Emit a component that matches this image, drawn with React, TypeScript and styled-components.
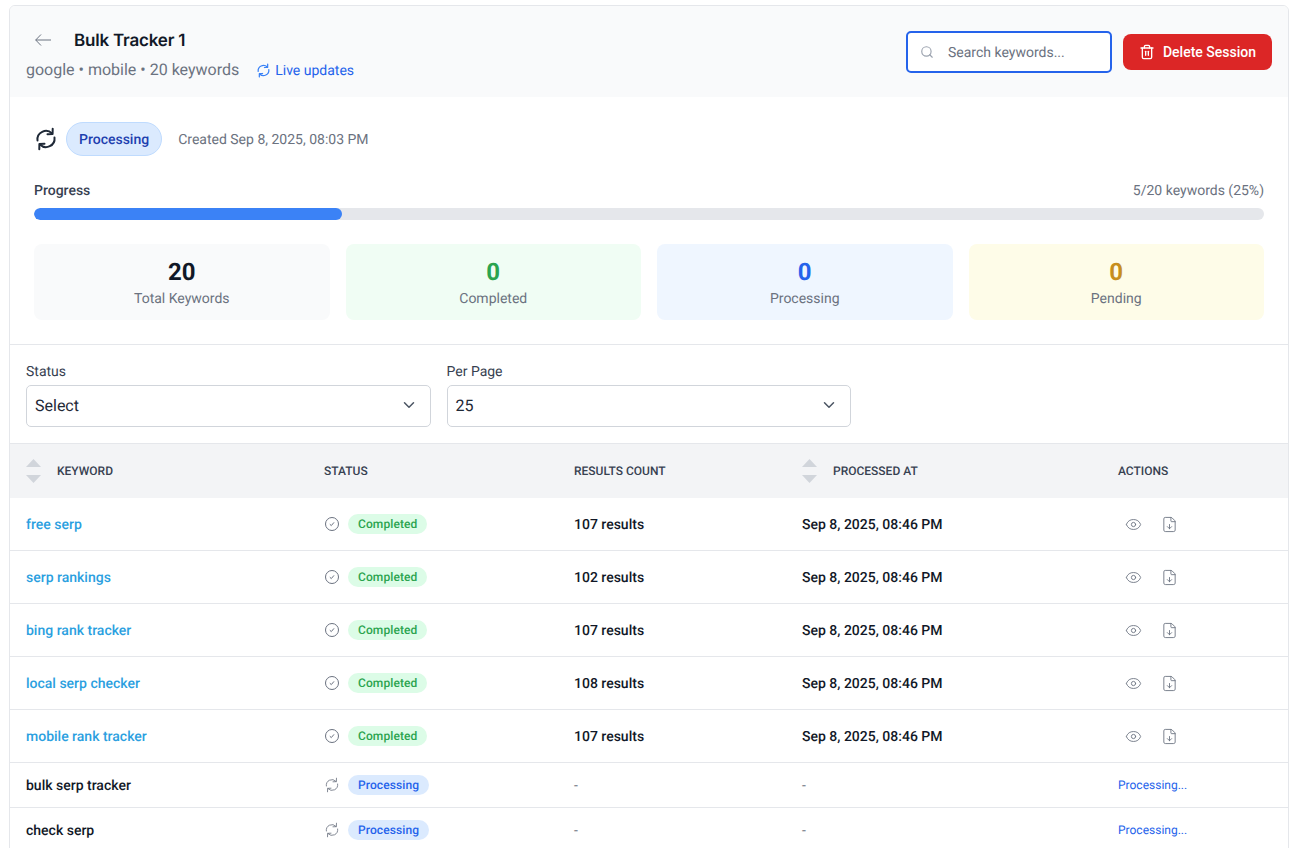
import React from "react";
import styled, { createGlobalStyle } from "styled-components";
import { Search, Trash2, ChevronDown, Eye, FileDown } from "lucide-react";

const Global = createGlobalStyle`
  html, body { margin: 0; padding: 0; height: 848px; overflow: hidden; background: #fff; }
  body { font-family: Roboto, "Liberation Sans", sans-serif; color: #111827; text-rendering: geometricPrecision; -webkit-font-smoothing: antialiased; }
  * { box-sizing: border-box; }
`;

const Page = styled.div`
  padding: 5px 9px 0 9px;
  height: 848px;
  overflow: hidden;
`;
const Card = styled.div`
  border: 1px solid #e5e7eb;
  border-radius: 6px;
  overflow: hidden;
  background: #fff;
  height: 900px;
`;
const Header = styled.header`
  height: 91px;
  background: #f9fafb;
  padding: 0 16px 0 16px;
  display: flex;
  align-items: flex-start;
  justify-content: space-between;
`;
const TitleBlock = styled.div`
  display: flex;
  flex-direction: column;
`;
const TitleRow = styled.div`
  display: flex;
  align-items: center;
  gap: 23px;
  padding: 22px 0 0 9px;
  height: 45px;
  color: #6b7280;
`;
const Title = styled.h1`
  margin: 0;
  padding-top: 2px;
  font-family: Inter, sans-serif;
  font-size: 17px;
  font-weight: 600;
  letter-spacing: -0.2px;
  color: #111827;
`;
const MetaRow = styled.div`
  display: flex;
  align-items: center;
  margin-top: 9px;
  font-size: 16px;
  color: #6b7280;
  gap: 17px;
`;
const Live = styled.span`
  display: inline-flex;
  align-items: center;
  gap: 4px;
  padding-top: 2px;
  font-size: 14px;
  color: #2563eb;
`;
const LiveIcon = styled.span`
  display: inline-flex;
  color: #3b82f6;
`;
const HeaderActions = styled.div`
  display: flex;
  align-items: center;
  gap: 11px;
  padding-top: 25px;
`;
const SearchBox = styled.div`
  width: 206px;
  height: 42px;
  border: 2px solid #2563eb;
  border-radius: 5px;
  background: #fff;
  display: flex;
  align-items: center;
  gap: 14px;
  padding-left: 12px;
  font-size: 14px;
  color: #6b7280;
`;
const SearchHint = styled.span`
  padding-top: 2px;
`;
const DeleteButton = styled.button`
  height: 36px;
  width: 149px;
  border: 0;
  border-radius: 8px;
  background: #dc2626;
  color: #fff;
  font-family: Roboto, sans-serif;
  font-size: 14px;
  font-weight: 500;
  display: flex;
  align-items: center;
  justify-content: center;
  gap: 8px;
`;
const Summary = styled.section`
  padding: 25px 24px 24px 24px;
  height: 248px;
  border-bottom: 1px solid #e5e7eb;
`;
const StatusLine = styled.div`
  display: flex;
  align-items: center;
  height: 34px;
  color: #1f2937;
`;
const BigBadge = styled.span`
  margin-left: 8px;
  height: 34px;
  padding: 2px 12px 0;
  border: 1px solid #bfdbfe;
  border-radius: 17px;
  background: #dbeafe;
  color: #1e40af;
  font-size: 14px;
  font-weight: 500;
  display: inline-flex;
  align-items: center;
`;
const Created = styled.span`
  margin-left: 16px;
  padding-top: 2px;
  font-size: 14px;
  color: #6b7280;
`;
const ProgressHead = styled.div`
  display: flex;
  justify-content: space-between;
  margin-top: 24px;
  height: 20px;
  font-size: 14px;
  line-height: 22px;
  color: #6b7280;
`;
const ProgressLabel = styled.span`
  font-weight: 500;
  color: #374151;
`;
const Track = styled.div`
  margin-top: 8px;
  height: 12px;
  border-radius: 6px;
  background: #e5e7eb;
  overflow: hidden;
`;
const Fill = styled.div`
  height: 100%;
  border-radius: 6px;
  background: #3b82f6;
`;
const Stats = styled.div`
  display: grid;
  grid-template-columns: repeat(4, 1fr);
  gap: 16px;
  margin-top: 24px;
`;
const Stat = styled.div<{ $bg: string }>`
  height: 76px;
  border-radius: 8px;
  background: ${p => p.$bg};
  display: flex;
  flex-direction: column;
  align-items: center;
  padding-top: 12px;
`;
const StatValue = styled.div<{ $color: string }>`
  font-size: 24px;
  line-height: 32px;
  font-weight: 700;
  color: ${p => p.$color};
`;
const StatLabel = styled.div`
  padding-top: 1px;
  font-size: 14px;
  line-height: 20px;
  color: #6b7280;
`;
const Filters = styled.section`
  height: 99px;
  padding: 16px 16px 0 16px;
  display: flex;
  gap: 16px;
  border-bottom: 1px solid #e5e7eb;
`;
const Field = styled.div`
  width: 404.5px;
`;
const FieldLabel = styled.div`
  padding-top: 1px;
  font-size: 14px;
  line-height: 20px;
  font-weight: 400;
  color: #374151;
  margin-bottom: 3px;
`;
const Select = styled.div`
  height: 42px;
  border: 1px solid #d1d5db;
  border-radius: 5px;
  background: #fff;
  display: flex;
  align-items: center;
  justify-content: space-between;
  padding: 0 12px 2px 8px;
  font-size: 16px;
  color: #1f2937;
`;
const Table = styled.table`
  width: 100%;
  table-layout: fixed;
  border-collapse: separate;
  border-spacing: 0;
`;
const Th = styled.th`
  height: 54px;
  padding: 0 16px;
  background: #f3f4f6;
  text-align: left;
  font-size: 12px;
  font-weight: 500;
  text-transform: uppercase;
  color: #374151;
`;
const SortWrap = styled.span`
  display: flex;
  align-items: center;
  gap: 16px;
`;
const SortIcon = styled.svg`
  width: 15px;
  height: 26px;
  flex: none;
  display: block;
`;
const Td = styled.td<{ $h: number }>`
  height: ${p => p.$h}px;
  padding: 2px 16px 0;
  font-size: 14px;
  font-weight: 500;
  color: #111827;
  border-bottom: 1px solid #e5e7eb;
`;
const Link = styled.a`
  color: #2b9fe0;
  font-weight: 500;
  text-decoration: none;
`;
const StatusCell = styled.div`
  display: flex;
  align-items: center;
  gap: 8px;
  margin-top: -2px;
  color: #6b7280;
`;
const Pill = styled.span<{ $kind: "done" | "proc" }>`
  height: 20px;
  padding: 0 10px;
  border-radius: 10px;
  font-size: 12px;
  font-weight: 500;
  letter-spacing: 0.1px;
  display: inline-flex;
  align-items: center;
  background: ${p => (p.$kind === "done" ? "#dcfce7" : "#dbeafe")};
  color: ${p => (p.$kind === "done" ? "#2ba44f" : "#2563eb")};
`;
const Actions = styled.div`
  display: flex;
  align-items: center;
  gap: 19px;
  margin-top: -2px;
  padding-left: 7px;
  color: #6b7280;
`;
const Dash = styled.span`
  color: #6b7280;
  font-weight: 400;
`;
const ProcLink = styled.span`
  display: block;
  margin-top: -2px;
  font-size: 12px;
  font-weight: 400;
  color: #2563eb;
`;

const Sort = () => (
  <SortIcon viewBox="0 0 15 26" aria-hidden="true">
    <path d="M7.5 1 15 9H0Z" fill="#d1d5db" />
    <path d="M0 17H15L7.5 25Z" fill="#d1d5db" />
  </SortIcon>
);

const Back = () => (
  <svg width="16" height="12" viewBox="0 0 16 12" fill="none" stroke="currentColor" strokeWidth="1" aria-hidden="true">
    <path d="M6 .5.7 6 6 11.5M.7 6H16" />
  </svg>
);

const Sync = ({ size, width }: { size: number; width: number }) => (
  <svg width={size} height={size} viewBox="0 0 24 24" fill="none" stroke="currentColor" strokeWidth={width} strokeLinecap="round" strokeLinejoin="round" aria-hidden="true">
    <path d="M3.5 13.5A8.5 8.5 0 0 1 18 6.5" />
    <path d="M18.7 1.8 18.6 7 13.5 7.2" />
    <path d="M20.5 10.5A8.5 8.5 0 0 1 6 17.5" />
    <path d="M5.3 22.2 5.4 17 10.5 16.8" />
  </svg>
);

const Check = () => (
  <svg width="16" height="16" viewBox="0 0 16 16" fill="none" stroke="currentColor" strokeWidth="1" aria-hidden="true">
    <circle cx="8" cy="8" r="6.5" />
    <path d="M5.8 8.2 7.3 9.6 10 6.4" />
  </svg>
);

const done = [
  ["free serp", "107 results"],
  ["serp rankings", "102 results"],
  ["bing rank tracker", "107 results"],
  ["local serp checker", "108 results"],
  ["mobile rank tracker", "107 results"],
];
const processing = ["bulk serp tracker", "check serp"];

export default function App() {
  return (
    <Page>
      <Global />
      <Card>
        <Header>
          <TitleBlock>
            <TitleRow>
              <Back />
              <Title>Bulk Tracker 1</Title>
            </TitleRow>
            <MetaRow>
              <span>google • mobile • 20 keywords</span>
              <Live><LiveIcon><Sync size={15} width={2} /></LiveIcon>Live updates</Live>
            </MetaRow>
          </TitleBlock>
          <HeaderActions>
            <SearchBox>
              <Search size={14} color="#9ca3af" />
              <SearchHint>Search keywords...</SearchHint>
            </SearchBox>
            <DeleteButton><Trash2 size={16} />Delete Session</DeleteButton>
          </HeaderActions>
        </Header>
        <Summary>
          <StatusLine>
            <Sync size={24} width={2} />
            <BigBadge>Processing</BigBadge>
            <Created>Created Sep 8, 2025, 08:03 PM</Created>
          </StatusLine>
          <ProgressHead>
            <ProgressLabel>Progress</ProgressLabel>
            <span>5/20 keywords (25%)</span>
          </ProgressHead>
          <Track><Fill style={{ width: "25%" }} /></Track>
          <Stats>
            <Stat $bg="#f9fafb"><StatValue $color="#111827">20</StatValue><StatLabel>Total Keywords</StatLabel></Stat>
            <Stat $bg="#f0fdf4"><StatValue $color="#2ba44f">0</StatValue><StatLabel>Completed</StatLabel></Stat>
            <Stat $bg="#eff6ff"><StatValue $color="#2563eb">0</StatValue><StatLabel>Processing</StatLabel></Stat>
            <Stat $bg="#fefce8"><StatValue $color="#c78e1d">0</StatValue><StatLabel>Pending</StatLabel></Stat>
          </Stats>
        </Summary>
        <Filters>
          <Field>
            <FieldLabel>Status</FieldLabel>
            <Select>Select<ChevronDown size={18} color="#4b5563" /></Select>
          </Field>
          <Field>
            <FieldLabel>Per Page</FieldLabel>
            <Select>25<ChevronDown size={18} color="#4b5563" /></Select>
          </Field>
        </Filters>
        <Table>
          <colgroup>
            <col style={{ width: 298 }} />
            <col style={{ width: 250 }} />
            <col style={{ width: 228 }} />
            <col style={{ width: 316 }} />
            <col />
          </colgroup>
          <thead>
            <tr>
              <Th><SortWrap><Sort />Keyword</SortWrap></Th>
              <Th>Status</Th>
              <Th>Results Count</Th>
              <Th><SortWrap><Sort />Processed At</SortWrap></Th>
              <Th>Actions</Th>
            </tr>
          </thead>
          <tbody>
            {done.map(([k, r]) => (
              <tr key={k}>
                <Td $h={53}><Link href="#">{k}</Link></Td>
                <Td $h={53}><StatusCell><Check /><Pill $kind="done">Completed</Pill></StatusCell></Td>
                <Td $h={53}>{r}</Td>
                <Td $h={53}>Sep 8, 2025, 08:46 PM</Td>
                <Td $h={53}><Actions><Eye size={17} strokeWidth={1.25} /><FileDown size={17} strokeWidth={1.25} /></Actions></Td>
              </tr>
            ))}
            {processing.map(k => (
              <tr key={k}>
                <Td $h={45}>{k}</Td>
                <Td $h={45}><StatusCell><Sync size={16} width={1.25} /><Pill $kind="proc">Processing</Pill></StatusCell></Td>
                <Td $h={45}><Dash>-</Dash></Td>
                <Td $h={45}><Dash>-</Dash></Td>
                <Td $h={45}><ProcLink>Processing...</ProcLink></Td>
              </tr>
            ))}
          </tbody>
        </Table>
      </Card>
    </Page>
  );
}
